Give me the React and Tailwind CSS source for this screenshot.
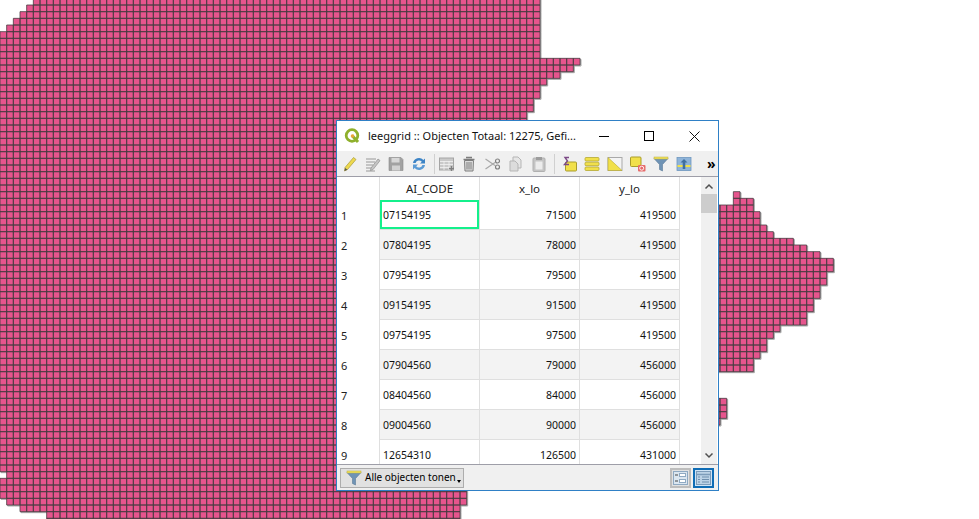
import React from "react";

// map grid: each row is [first col, last col + 1]
const CELL = 20 / 3;
const rightEnds = {
  0: 81, 1: 81, 2: 81, 3: 81, 4: 81, 5: 81, 6: 81, 7: 81, 8: 81,
  9: 87, 10: 86, 11: 84, 12: 82, 13: 81, 14: 81, 15: 80, 16: 80, 17: 79,
  29: 111, 30: 113, 31: 113, 32: 114, 33: 114, 34: 115, 35: 116, 36: 119, 37: 121,
  38: 123, 39: 125, 40: 125, 41: 124, 42: 124, 43: 123, 44: 123, 45: 122, 46: 122,
  47: 121, 48: 121, 49: 117, 50: 116, 51: 115, 52: 115, 53: 114, 54: 113, 55: 113,
  60: 109, 61: 109, 62: 109, 63: 108,
  73: 70, 74: 70, 75: 70, 76: 69, 77: 69, 78: 69,
};
const leftStarts = { 0: 5, 1: 4, 2: 3, 3: 2, 4: 1, 71: 1, 75: 1, 76: 3, 77: 7, 78: 7 };

function gridPath() {
  let d = "";
  for (let k = 0; k < 79; k++) {
    const from = leftStarts[k] ?? 0;
    const to = rightEnds[k] ?? 79;
    const y = -5 / 3 + k * CELL;
    for (let c = from; c < to; c++) {
      // the two top rows of the east tip start past the window
      if ((k === 29 || k === 30) && c >= 60 && c < 110) continue;
      d += `M${(c * CELL).toFixed(2)} ${y.toFixed(2)}h${CELL.toFixed(2)}v${CELL.toFixed(2)}h-${CELL.toFixed(2)}z`;
    }
  }
  return d;
}
const mapPath = gridPath();

const rows = [
  ["07154195", "71500", "419500"],
  ["07804195", "78000", "419500"],
  ["07954195", "79500", "419500"],
  ["09154195", "91500", "419500"],
  ["09754195", "97500", "419500"],
  ["07904560", "79000", "456000"],
  ["08404560", "84000", "456000"],
  ["09004560", "90000", "456000"],
  ["12654310", "126500", "431000"],
];

const Icon = ({ children, className = "" }) => (
  <svg width="16" height="16" viewBox="0 0 16 16" className={`shrink-0 ${className}`}>
    {children}
  </svg>
);

const Funnel = ({ size = 16 }) => (
  <svg width={size} height={size} viewBox="0 0 16 16" className="shrink-0">
    <path d="M1 2.5h14L9.5 8.5V15l-3-1.5v-5z" fill="#6f93b5" stroke="#5a7a99" strokeWidth=".6" />
    <rect x="1" y="1" width="14" height="2" fill="#f1e25c" stroke="#b9ad3c" strokeWidth=".5" />
  </svg>
);

const Toolbar = () => (
  <div className="flex h-[25px] items-center bg-[#f0f0f0] pl-[5px] border-b border-[#9e9ea8] box-content">
    <div className="flex items-center gap-[7px]">
      {/* edit pencil */}
      <Icon>
        <path d="M3 11.5 11.5 1.5l2.5 2-8.5 10-3 1.5z" fill="#eed94e" stroke="#a69a3a" strokeWidth=".7" />
        <path d="M2.5 15l.6-3 2.3 1.8z" fill="#555" />
      </Icon>
      {/* multi edit */}
      <Icon>
        <path d="M1 3h10M1 6h9M1 9h7M1 12h6M1 15h9" stroke="#b5b5b5" strokeWidth="1.6" />
        <path d="M6 12 13 3l2 1.6-7 9-2.6 1z" fill="#c4c4c4" stroke="#8e8e8e" strokeWidth=".7" />
      </Icon>
      {/* save */}
      <Icon>
        <path d="M1 1.5h12l2 2v11H1z" fill="#a2a2a2" stroke="#8a8a8a" strokeWidth=".6" />
        <rect x="3.5" y="2" width="8" height="4.5" fill="#d8d8d8" />
        <rect x="4" y="9.5" width="8" height="5" fill="#d2d2d2" />
      </Icon>
      {/* reload */}
      <Icon>
        <path d="M2 7a6 6 0 0 1 10.4-3L14 2.5V7.5H9l1.8-1.8A3.6 3.6 0 0 0 4.6 7z" fill="#3d84c6" />
        <path d="M14 9a6 6 0 0 1-10.4 3L2 13.5V8.5h5L5.2 10.3a3.6 3.6 0 0 0 6.2-1.3z" fill="#5b9bd5" />
      </Icon>
      <div className="w-px h-[20px] bg-[#d0d0d0]" />
    </div>
    <div className="flex items-center gap-[7px] ml-[4px]">
      {/* add feature */}
      <Icon>
        <rect x="0.5" y="2" width="14" height="12" fill="#c9c9c9" stroke="#a5a5a5" />
        <path d="M1 5.5h13M1 8.5h13M1 11.5h13M5 5v9M10 5v9" stroke="#f2f2f2" strokeWidth=".8" />
        <path d="M12.5 10v5M10 12.5h5" stroke="#808080" strokeWidth="1.4" />
      </Icon>
      {/* trash */}
      <Icon>
        <path d="M4 1.5h6M1.5 3.5h11" stroke="#7d7d7d" strokeWidth="1.4" />
        <path d="M2.5 4.5h9L11 15H3z" fill="#dcdcdc" stroke="#7d7d7d" />
        <path d="M5 6v7.5M7 6v7.5M9 6v7.5" stroke="#7d7d7d" />
      </Icon>
      {/* cut */}
      <Icon>
        <path d="M0.5 3 10 9.5M0.5 13 10 6.5" stroke="#a8a8a8" strokeWidth="1.2" />
        <circle cx="12.5" cy="5" r="2" fill="none" stroke="#808080" strokeWidth="1.2" />
        <circle cx="12.5" cy="11" r="2" fill="none" stroke="#808080" strokeWidth="1.2" />
      </Icon>
      {/* copy */}
      <Icon>
        <path d="M5 1h5l3 3v8H5z" fill="#e6e6e6" stroke="#b5b5b5" />
        <path d="M2 5h5l3 3v7H2z" fill="#dcdcdc" stroke="#b5b5b5" />
      </Icon>
      {/* paste */}
      <Icon>
        <rect x="2" y="2" width="12" height="13.5" rx="1" fill="#c4c4c4" stroke="#b0b0b0" />
        <rect x="5" y="1" width="6" height="3" fill="#9c9c9c" />
        <rect x="4.5" y="5.5" width="7" height="8" fill="#ececec" />
      </Icon>
      <div className="w-px h-[20px] bg-[#d0d0d0]" />
    </div>
    <div className="flex items-center gap-[7px] ml-[6px]">
      {/* select by expression */}
      <Icon>
        <rect x="4.5" y="6" width="11" height="9" rx="1" fill="#f1e04a" stroke="#a99c2a" />
        <path d="M8 1.5H4L6.5 5 3.5 8.5H8" fill="none" stroke="#7c4a86" strokeWidth="1.4" />
      </Icon>
      {/* select all */}
      <Icon>
        <rect x="1" y="1.5" width="14" height="3.5" rx="1" fill="#f1e04a" stroke="#b5a833" strokeWidth=".8" />
        <rect x="1" y="6.2" width="14" height="3.5" rx="1" fill="#f1e04a" stroke="#b5a833" strokeWidth=".8" />
        <rect x="1" y="11" width="14" height="3.5" rx="1" fill="#f1e04a" stroke="#b5a833" strokeWidth=".8" />
      </Icon>
      {/* invert */}
      <Icon>
        <rect x="1" y="1.5" width="14" height="13" fill="#f4f4f4" stroke="#a9a9a9" />
        <path d="M1 1.5 15 14.5H1z" fill="#f1e04a" stroke="#b5a833" strokeWidth=".6" />
      </Icon>
      {/* deselect */}
      <Icon>
        <rect x="0.5" y="1" width="10.5" height="9.5" rx="1" fill="#f1e04a" stroke="#a99c2a" />
        <rect x="8" y="9" width="7.5" height="6.5" rx="1" fill="#e66a6a" />
        <circle cx="11.7" cy="12.2" r="2" fill="none" stroke="#fff" strokeWidth=".9" />
      </Icon>
      <Funnel />
      {/* move selection to top */}
      <Icon>
        <rect x="1" y="1.5" width="14" height="13" fill="#8fb4d9" stroke="#6e97bf" strokeWidth=".8" />
        <rect x="1.5" y="9" width="13" height="2" fill="#f1e04a" />
        <path d="M8 3 4.5 6.5h2.2V13h2.6V6.5h2.2z" fill="#3f6f9e" />
      </Icon>
    </div>
    <span className="ml-[15px] text-[14px] font-bold leading-none text-black">»</span>
  </div>
);

const Cell = ({ right, className = "", children }) => (
  <div className={`flex items-center w-[100px] border-r border-[#dfdfdf] ${right ? "justify-end pr-[3px] pt-[2px]" : "pl-[3px] pt-[2px]"} ${className}`}>
    {children}
  </div>
);

const AttributeTable = () => (
  <div className="flex flex-1 min-h-0 bg-white">
    <div className="flex-1 overflow-hidden">
      <div className="flex h-[23px] text-[11.5px] text-[#222]">
        <div className="w-[43px] border-r border-[#dfdfdf]" />
        {["AI_CODE", "x_lo", "y_lo"].map((name) => (
          <div key={name} className="flex w-[100px] items-center justify-center border-r border-[#dfdfdf]">
            {name}
          </div>
        ))}
      </div>
      {rows.map((row, i) => (
        <div key={row[0]} className="flex h-[30px] text-[#111]">
          <div className="flex w-[43px] items-center pl-[4px] pt-[3px] border-r border-[#dfdfdf] text-[11px] text-[#222]">{i + 1}</div>
          <div className={`flex border-b border-[#dfdfdf] ${i % 2 === 1 ? "bg-[#f3f3f3]" : ""}`}>
            {i === 0 ? (
              <div className="w-[100px] border-r border-[#dfdfdf]">
                <div className="flex h-full items-center pl-[3px] pt-[2px] outline-2 -outline-offset-2 outline-[#14f08c]">{row[0]}</div>
              </div>
            ) : (
              <Cell>{row[0]}</Cell>
            )}
            <Cell right>{row[1]}</Cell>
            <Cell right>{row[2]}</Cell>
          </div>
        </div>
      ))}
    </div>
    <div className="flex w-[16px] flex-col items-center bg-[#f0f0f0] mr-px">
      <svg width="10" height="16" viewBox="0 0 10 16" className="mt-[2px] shrink-0">
        <path d="M1.5 9.5 5 6l3.5 3.5" fill="none" stroke="#505050" strokeWidth="1.5" />
      </svg>
      <div className="mt-[-1px] h-[19px] w-full bg-[#cdcdcd]" />
      <svg width="10" height="16" viewBox="0 0 10 16" className="mt-auto mb-[1px] shrink-0">
        <path d="M1.5 6.5 5 10l3.5-3.5" fill="none" stroke="#505050" strokeWidth="1.5" />
      </svg>
    </div>
  </div>
);

const Footer = () => (
  <div className="flex h-[26px] items-center bg-[#f0f0f0] border-t border-[#9e9ea8] pl-[3px] pr-[4px]">
    <button className="flex h-[20px] w-[124px] items-center gap-[3px] border border-[#adadad] bg-[#e1e1e1] pl-[5px] text-[10px] text-black">
      <Funnel />
      <span className="whitespace-nowrap">Alle objecten tonen</span>
      <span className="mt-[7px] ml-[-2px] h-0 w-0 border-x-[2.5px] border-t-[3px] border-x-transparent border-t-black" />
    </button>
    <button className="ml-auto flex h-[20px] w-[21px] items-center justify-center border-2 border-[#bdbdbd] bg-[#e1e1e1]">
      <svg width="15" height="14" viewBox="0 0 15 14">
        <rect x="0.5" y="0.5" width="14" height="13" fill="#dbe6f0" stroke="#8fa9c2" />
        <path d="M2 4h3M2 10h3" stroke="#444" strokeWidth="1.2" />
        <rect x="6.5" y="2.5" width="6" height="3" fill="#fff" stroke="#8fa9c2" />
        <rect x="6.5" y="8.5" width="6" height="3" fill="#fff" stroke="#8fa9c2" />
      </svg>
    </button>
    <button className="ml-[2px] flex h-[20px] w-[21px] items-center justify-center border-2 border-[#0f6cb5] bg-[#cfe3f5]">
      <svg width="15" height="14" viewBox="0 0 15 14">
        <rect x="0.5" y="0.5" width="14" height="13" fill="#bcd2e6" stroke="#7d9cba" />
        <path d="M1 3.5h13" stroke="#7d9cba" strokeWidth="1.5" />
        <path d="M2 6h2M2 8.5h2M2 11h2M6 6h7M6 8.5h7M6 11h7" stroke="#6f8fae" />
      </svg>
    </button>
  </div>
);

export default function App() {
  return (
    <div className="relative h-[519px] w-[979px] overflow-hidden bg-white font-['Noto_Sans',sans-serif] text-[10.5px]">
      <svg width="979" height="519" viewBox="0 0 979 519" className="block">
        <path d={mapPath} fill="#a8a8a8" stroke="#a8a8a8" transform="translate(1 1)" />
        <path d={mapPath} fill="#e6558d" stroke="#463c41" strokeWidth=".8" />
      </svg>

      {/* attribute table window */}
      <div className="absolute left-[336px] top-[120px] flex h-[371px] w-[383px] flex-col border border-[#2f80c6] bg-white">
        <div className="flex h-[30px] items-center pl-[7px]">
          <svg width="17" height="16" viewBox="0 0 17 16" className="shrink-0">
            <circle cx="8" cy="7.5" r="5.8" fill="none" stroke="#8fb02c" strokeWidth="2.8" />
            <path d="M8 7.5 14 14" stroke="#8fb02c" strokeWidth="3" />
            <circle cx="8.5" cy="8" r="1.8" fill="#e8a23a" />
          </svg>
          <span className="ml-[7px] w-[214px] text-[11px] text-[#111] whitespace-nowrap">leeggrid :: Objecten Totaal: 12275, Gefi...</span>
          <div className="ml-[17px] h-px w-[10px] bg-black" />
          <div className="ml-[35px] h-[10px] w-[10px] border border-black" />
          <svg width="11" height="11" viewBox="0 0 11 11" className="ml-[35px]">
            <path d="M.5.5l10 10M10.5.5l-10 10" stroke="#111" />
          </svg>
        </div>
        <Toolbar />
        <AttributeTable />
        <Footer />
      </div>
    </div>
  );
}
